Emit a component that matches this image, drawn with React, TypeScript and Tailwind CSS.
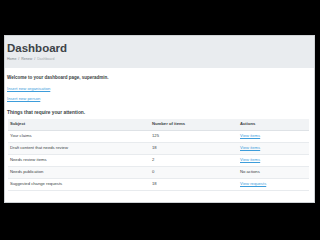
const rows = [
  { subject: 'Your claims', count: '125', action: 'View items' },
  { subject: 'Draft content that needs review', count: '18', action: 'View items' },
  { subject: 'Needs review items', count: '2', action: 'View items' },
  { subject: 'Needs publication', count: '0', action: null },
  { subject: 'Suggested change requests', count: '18', action: 'View requests' },
]

export default function App() {
  return (
    <div className="w-[320px] h-[240px] bg-black pt-[35px] pl-[4px] font-['Liberation_Sans',Arial,sans-serif]">
      <div className="w-[311px] h-[168px] bg-white border border-[#cfd3d6] flex flex-col">
        {/* Page header */}
        <div className="h-[32px] bg-[#e9ecef] px-[2px] pt-[7px]">
          <h1 className="text-[11.5px] leading-none font-bold text-[#3d4347]">Dashboard</h1>
          <div className="mt-[3px] flex items-center gap-[2px] text-[3.5px] leading-none text-[#7a8187]">
            <span>Home</span>
            <span>/</span>
            <span>Renew</span>
            <span>/</span>
            <span className="text-[#a3a9ae]">Dashboard</span>
          </div>
        </div>

        {/* Content */}
        <div className="px-[2px] pt-[7px] text-[#3a3f44]">
          <p className="text-[4.5px] leading-[6px] font-bold">Welcome to your dashboard page, superadmin.</p>
          <a className="block mt-[5px] text-[4.2px] leading-[6px] text-[#3d9ddb] underline decoration-[0.3px] underline-offset-[0.5px]">Insert new organisation</a>
          <a className="block mt-[4px] text-[4.2px] leading-[6px] text-[#3d9ddb] underline decoration-[0.3px] underline-offset-[0.5px]">Insert new person</a>
          <p className="mt-[8px] text-[4.8px] leading-[6px] font-bold">Things that require your attention.</p>

          <div className="ml-[1px] mt-[3px] w-[301px] text-[4.2px]">
            <div className="grid grid-cols-[142px_88px_71px] h-[12px] items-center bg-[#f1f3f5] border-b border-[#dee2e6] font-semibold">
              <span className="pl-[2px]">Subject</span>
              <span className="pl-[2px]">Number of items</span>
              <span className="pl-[2px]">Actions</span>
            </div>
            {rows.map((row, i) => (
              <div
                key={row.subject}
                className={`grid grid-cols-[142px_88px_71px] h-[12px] items-center border-b border-[#e8ebee] ${
                  i % 2 === 1 ? 'bg-[#f8f9fa]' : 'bg-white'
                }`}
              >
                <span className="pl-[2px]">{row.subject}</span>
                <span className="pl-[2px]">{row.count}</span>
                {row.action ? (
                  <a className="pl-[2px] text-[#3d9ddb] underline decoration-[0.3px] underline-offset-[0.5px]">{row.action}</a>
                ) : (
                  <span className="pl-[2px]">No actions</span>
                )}
              </div>
            ))}
          </div>
        </div>
      </div>
    </div>
  )
}
